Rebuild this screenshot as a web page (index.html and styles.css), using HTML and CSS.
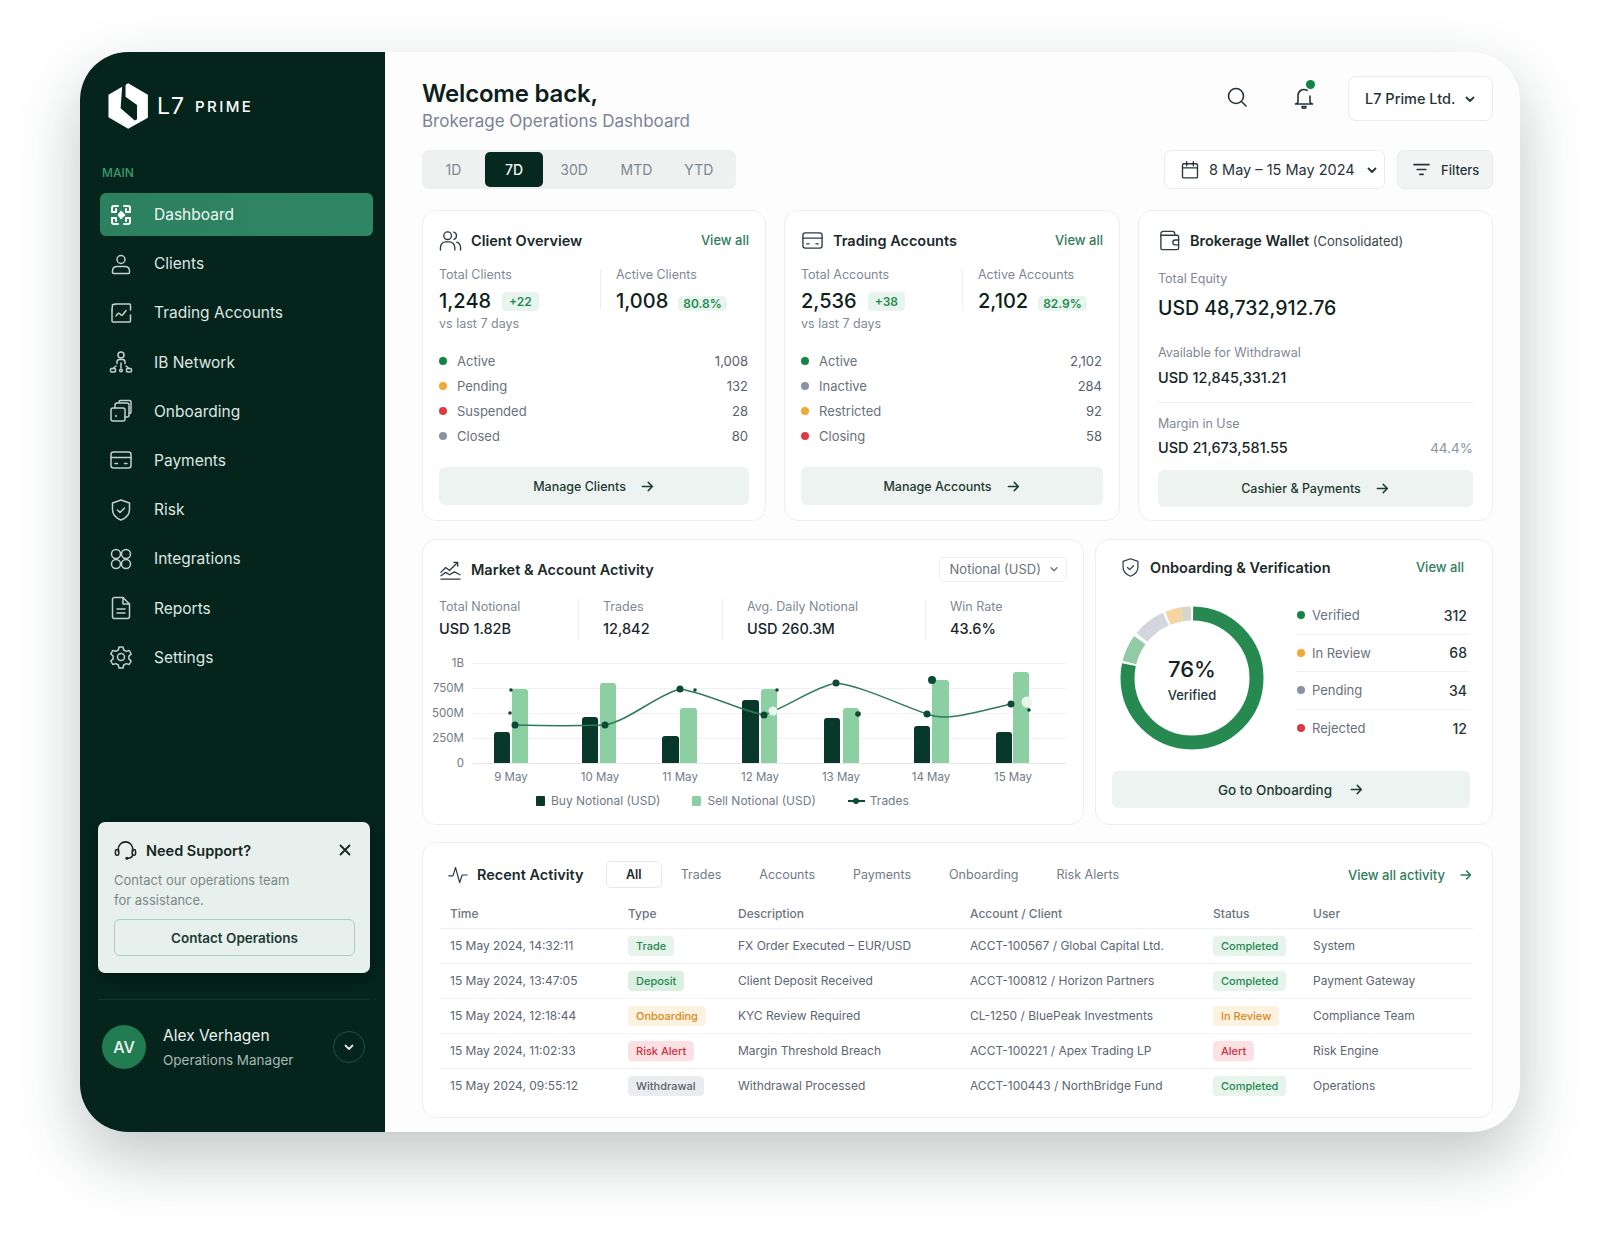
FILE: index.html
```html
<!DOCTYPE html>
<html lang="en">
<head>
    <meta charset="UTF-8">
    <meta name="viewport" content="width=device-width, initial-scale=1.0">
    <title>L7 Prime - Brokerage Operations Dashboard</title>
    <link rel="stylesheet" href="styles.css">
</head>
<body>
    <!-- shared icons -->
    <svg class="sprite" xmlns="http://www.w3.org/2000/svg">
        <symbol id="i-arrow" viewBox="0 0 16 16"><path d="M2.5 8h10.5M8.8 3.6 13.2 8l-4.4 4.4"/></symbol>
        <symbol id="i-chev" viewBox="0 0 12 12"><path d="M2.5 4.5 6 8l3.5-3.5"/></symbol>
        <symbol id="i-card" viewBox="0 0 24 24"><rect x="2" y="4" width="20" height="16" rx="2.5"/><path d="M2 9.5h20M6 15.5h2.5M15.5 15.5H18"/></symbol>
        <symbol id="i-shield" viewBox="0 0 24 24"><path d="M12 2 20.5 5v6.5c0 5-3.5 8.6-8.5 10.5-5-1.900-8.500-5.500-8.500-10.500V5z"/><path d="m8.500 12 2.500 2.500 4.500-4.500"/></symbol>
    </svg>

    <div class="frame">
        <aside class="sidebar">
            <div class="logo">
                <svg class="logo-mark" viewBox="85 98 122 140"><path class="logo-hex" d="M145 99 205 134V204L145 237 85 202V134Z"/><path class="logo-cut" d="M127 105 122 175 165 212 172 208V165L137 140V100Z"/></svg>
                <span class="logo-l7">L7</span>
                <span class="logo-prime">PRIME</span>
            </div>
            <div class="nav-label">MAIN</div>
            <nav class="nav">
                <a class="nav-item active">
                    <svg viewBox="0 0 24 24"><path d="M9 3H5a2 2 0 0 0-2 2v4M15 3h4a2 2 0 0 1 2 2v4M9 21H5a2 2 0 0 1-2-2v-4M15 21h4a2 2 0 0 0 2-2v-4"/><path d="M3 9h4V6M21 9h-4V6M3 15h4v3M21 15h-4v3"/><path class="fill" d="M12 7.500 16.500 12 12 16.500 8.500 12z"/></svg>
                    Dashboard
                </a>
                <a class="nav-item">
                    <svg viewBox="0 0 24 24"><circle cx="12" cy="7.500" r="4"/><path d="M3.500 20.500v-1.500c0-2.800 2.200-4.500 5-4.500h7c2.800 0 5 1.700 5 4.500v1.500a1 1 0 0 1-1 1h-15a1 1 0 0 1-1-1z"/></svg>
                    Clients
                </a>
                <a class="nav-item">
                    <svg viewBox="0 0 24 24"><path d="M6 3h14.500a1 1 0 0 1 1 1v5M21.500 14v6a1 1 0 0 1-1 1H4a1 1 0 0 1-1-1V9"/><path d="M3 9l.5-5.500H6M7 15c2-3.500 3-3.500 4.500-1.500s2.500 0 5.500-4"/></svg>
                    Trading Accounts
                </a>
                <a class="nav-item">
                    <svg viewBox="0 0 24 24"><circle cx="12" cy="5" r="3"/><path d="M8 13.500V12a2.500 2.500 0 0 1 2.500-2.500h3A2.500 2.500 0 0 1 16 12v1.500M12 13v5M7 16l-3 2.500M17 16l3 2.500"/><rect x="1.500" y="18.500" width="5" height="3.500" rx="1"/><circle cx="12" cy="20.500" r="1.300"/><rect x="17.500" y="18.500" width="5" height="3.500" rx="1"/></svg>
                    IB Network
                </a>
                <a class="nav-item">
                    <svg viewBox="0 0 24 24"><rect x="2" y="9" width="14" height="13" rx="2"/><path d="M6 9V6a2 2 0 0 1 2-2h10a2 2 0 0 1 2 2M16 18h2a2 2 0 0 0 2-2V7M10 4V3a1.500 1.500 0 0 1 1.500-1.500h9A1.500 1.500 0 0 1 22 3v10a1.500 1.500 0 0 1-1.500 1.500"/><circle class="fill" cx="7" cy="17" r="1"/></svg>
                    Onboarding
                </a>
                <a class="nav-item"><svg><use href="#i-card"/></svg>Payments</a>
                <a class="nav-item"><svg><use href="#i-shield"/></svg>Risk</a>
                <a class="nav-item">
                    <svg viewBox="0 0 24 24"><circle cx="7" cy="7" r="4.500"/><circle cx="17" cy="7" r="4.500"/><circle cx="7" cy="17" r="4.500"/><circle cx="17" cy="17" r="4.500"/></svg>
                    Integrations
                </a>
                <a class="nav-item">
                    <svg viewBox="0 0 24 24"><path d="M14 1.500H5.500a2 2 0 0 0-2 2v17a2 2 0 0 0 2 2h13a2 2 0 0 0 2-2V8z"/><path d="M14 1.500V8h6.500M8 13h8M8 17h8"/></svg>
                    Reports
                </a>
                <a class="nav-item">
                    <svg viewBox="0 0 24 24"><circle cx="12" cy="12" r="3.500"/><path d="M10 2h4l.7 3 2.500 1.400 3-.9 2 3.500-2.300 2.100v2.800l2.300 2.100-2 3.500-3-.9-2.500 1.400-.7 3h-4l-.7-3-2.500-1.400-3 .9-2-3.500 2.300-2.100V11L1.800 8.900l2-3.500 3 .9L9.300 5z"/></svg>
                    Settings
                </a>
            </nav>

            <div class="support">
                <div class="support-head">
                    <svg viewBox="0 0 24 24"><path d="M4.500 13v-2.500a7.500 7.500 0 0 1 15 0V13M19.500 16c0 2.500-2 4-4.500 4"/><rect x="1.500" y="11" width="3.500" height="6" rx="1.700"/><rect x="19" y="11" width="3.500" height="6" rx="1.700"/><circle class="fill" cx="13.500" cy="20" r="1.600"/></svg>
                    <strong>Need Support?</strong>
                    <svg class="support-close" viewBox="0 0 12 12"><path d="M1.500 1.500l9 9M10.500 1.500l-9 9"/></svg>
                </div>
                <p>Contact our operations team<br>for assistance.</p>
                <button class="support-btn">Contact Operations</button>
            </div>

            <div class="user">
                <div class="avatar">AV</div>
                <div class="user-info">
                    <div class="user-name">Alex Verhagen</div>
                    <div class="user-role">Operations Manager</div>
                </div>
                <div class="user-more"><svg><use href="#i-chev"/></svg></div>
            </div>
        </aside>

        <main class="main">
            <header class="topbar">
                <div>
                    <h1>Welcome back,</h1>
                    <div class="subtitle">Brokerage Operations Dashboard</div>
                </div>
                <div class="top-actions">
                    <svg class="top-icon" viewBox="0 0 24 24"><circle cx="11" cy="11" r="7.500"/><path d="m17 17 4 4"/></svg>
                    <div class="bell">
                        <svg class="top-icon" viewBox="0 0 24 24"><path d="M6 17V10.500a6 6 0 0 1 9-5.200M18 11v6M3.500 19c1.500-.5 2.500-1 2.500-2M20.500 19c-1.500-.5-2.500-1-2.500-2M3.500 19h17"/><path d="M10 21.500a2 2 0 0 0 4 0z"/></svg>
                        <span class="bell-dot"></span>
                    </div>
                    <div class="company">L7 Prime Ltd. <svg><use href="#i-chev"/></svg></div>
                </div>
            </header>

            <div class="toolbar">
                <div class="periods">
                    <span>1D</span>
                    <span class="active">7D</span>
                    <span>30D</span>
                    <span>MTD</span>
                    <span>YTD</span>
                </div>
                <div class="toolbar-right">
                    <div class="date-btn">
                        <svg viewBox="0 0 24 24"><rect x="3" y="4.500" width="18" height="17" rx="1.500"/><path d="M3 9.500h18M8 2v5M16 2v5"/></svg>
                        8 May – 15 May 2024
                        <svg class="chev"><use href="#i-chev"/></svg>
                    </div>
                    <div class="filter-btn">
                        <svg viewBox="0 0 16 16"><path d="M1 3.500h14M4 8h8M6.500 12.500h3"/></svg>
                        Filters
                    </div>
                </div>
            </div>

            <section class="row row-top">
                <div class="card">
                    <div class="card-head">
                        <svg class="head-icon" viewBox="0 0 24 24"><circle cx="9" cy="7" r="4"/><path d="M1.500 22v-2.500c0-3.500 2.500-6 5.500-6h4c3 0 5.500 2.500 5.500 6V22M15.500 3.200a4 4 0 0 1 0 7.600M18.500 13.800c2.300.7 4 2.700 4 5.700V22"/></svg>
                        <h2>Client Overview</h2>
                        <a class="view-all">View all</a>
                    </div>
                    <div class="stats">
                        <div class="stat">
                            <div class="label">Total Clients</div>
                            <div class="big">1,248 <span class="chip">+22</span></div>
                            <div class="label sub">vs last 7 days</div>
                        </div>
                        <div class="stat stat-side">
                            <div class="label">Active Clients</div>
                            <div class="big">1,008 <span class="chip low">80.8%</span></div>
                        </div>
                    </div>
                    <ul class="status-list">
                        <li><i class="dot green"></i>Active<b>1,008</b></li>
                        <li><i class="dot orange"></i>Pending<b>132</b></li>
                        <li><i class="dot red"></i>Suspended<b>28</b></li>
                        <li><i class="dot grey"></i>Closed<b>80</b></li>
                    </ul>
                    <a class="card-btn">Manage Clients <svg><use href="#i-arrow"/></svg></a>
                </div>

                <div class="card">
                    <div class="card-head">
                        <svg class="head-icon"><use href="#i-card"/></svg>
                        <h2>Trading Accounts</h2>
                        <a class="view-all">View all</a>
                    </div>
                    <div class="stats">
                        <div class="stat">
                            <div class="label">Total Accounts</div>
                            <div class="big">2,536 <span class="chip">+38</span></div>
                            <div class="label sub">vs last 7 days</div>
                        </div>
                        <div class="stat stat-side">
                            <div class="label">Active Accounts</div>
                            <div class="big">2,102 <span class="chip low">82.9%</span></div>
                        </div>
                    </div>
                    <ul class="status-list">
                        <li><i class="dot green"></i>Active<b>2,102</b></li>
                        <li><i class="dot grey"></i>Inactive<b>284</b></li>
                        <li><i class="dot orange"></i>Restricted<b>92</b></li>
                        <li><i class="dot red"></i>Closing<b>58</b></li>
                    </ul>
                    <a class="card-btn">Manage Accounts <svg><use href="#i-arrow"/></svg></a>
                </div>

                <div class="card wallet">
                    <div class="card-head">
                        <svg class="head-icon" viewBox="0 0 24 24"><path d="M3 7V5a2.500 2.500 0 0 1 2.500-2.500H15A2.500 2.500 0 0 1 17.500 5v1.500"/><path d="M3 7a1 1 0 0 1 1-.5h16a1.500 1.500 0 0 1 1.500 1.500v12a1.500 1.500 0 0 1-1.500 1.500H4.500A1.500 1.500 0 0 1 3 20z"/><path d="M21.500 11.500H18a2.500 2.500 0 0 0 0 5h3.500"/></svg>
                        <h2>Brokerage Wallet <span>(Consolidated)</span></h2>
                    </div>
                    <div class="label equity-label">Total Equity</div>
                    <div class="equity">USD 48,732,912.76</div>
                    <div class="label avail-label">Available for Withdrawal</div>
                    <div class="money avail">USD 12,845,331.21</div>
                    <div class="wallet-rule"></div>
                    <div class="label">Margin in Use</div>
                    <div class="money margin">USD 21,673,581.55 <span>44.4%</span></div>
                    <a class="card-btn">Cashier &amp; Payments <svg><use href="#i-arrow"/></svg></a>
                </div>
            </section>

            <section class="row row-mid">
                <div class="card market">
                    <div class="card-head">
                        <svg class="head-icon" viewBox="0 0 24 24"><path d="M2 15l5-5 4 3 8-8M15.500 4.500h4v4M2 18.500l5-3.500 4 2.500 5-3 6 3M2 22h20"/></svg>
                        <h2>Market &amp; Account Activity</h2>
                        <div class="mini-select">Notional (USD) <svg><use href="#i-chev"/></svg></div>
                    </div>
                    <div class="kpis">
                        <div class="kpi"><div class="label">Total Notional</div><div class="money">USD 1.82B</div></div>
                        <div class="kpi"><div class="label">Trades</div><div class="money">12,842</div></div>
                        <div class="kpi"><div class="label">Avg. Daily Notional</div><div class="money">USD 260.3M</div></div>
                        <div class="kpi"><div class="label">Win Rate</div><div class="money">43.6%</div></div>
                    </div>
                    <svg class="chart" viewBox="430 650 644 135">
                        <g class="grid">
                            <path d="M473 663.500H1066M473 688.500H1066M473 713.500H1066M473 738.500H1066"/>
                            <path class="base" d="M473 763.500H1066"/>
                        </g>
                        <g class="y-axis">
                            <text x="464" y="667">1B</text>
                            <text x="464" y="692">750M</text>
                            <text x="464" y="717">500M</text>
                            <text x="464" y="742">250M</text>
                            <text x="464" y="767">0</text>
                        </g>
                        <g class="bars-sell">
                            <path d="M512 763V692a3 3 0 0 1 3-3h10a3 3 0 0 1 3 3v71z"/>
                            <path d="M600 763V686a3 3 0 0 1 3-3h10a3 3 0 0 1 3 3v77z"/>
                            <path d="M680 763V711a3 3 0 0 1 3-3h11a3 3 0 0 1 3 3v52z"/>
                            <path d="M761 763V692a3 3 0 0 1 3-3h10a3 3 0 0 1 3 3v71z"/>
                            <path d="M843 763V711a3 3 0 0 1 3-3h10a3 3 0 0 1 3 3v52z"/>
                            <path d="M932 763V683a3 3 0 0 1 3-3h11a3 3 0 0 1 3 3v80z"/>
                            <path d="M1013 763V675a3 3 0 0 1 3-3h10a3 3 0 0 1 3 3v88z"/>
                        </g>
                        <g class="bars-buy">
                            <path d="M494 763V735a3 3 0 0 1 3-3h10a3 3 0 0 1 3 3v28z"/>
                            <path d="M582 763V720a3 3 0 0 1 3-3h10a3 3 0 0 1 3 3v43z"/>
                            <path d="M662 763V739a3 3 0 0 1 3-3h11a3 3 0 0 1 3 3v24z"/>
                            <path d="M742 763V703a3 3 0 0 1 3-3h11a3 3 0 0 1 3 3v60z"/>
                            <path d="M824 763V721a3 3 0 0 1 3-3h10a3 3 0 0 1 3 3v42z"/>
                            <path d="M914 763V729a3 3 0 0 1 3-3h10a3 3 0 0 1 3 3v34z"/>
                            <path d="M996 763V735a3 3 0 0 1 3-3h10a3 3 0 0 1 3 3v28z"/>
                        </g>
                        <path class="trend" d="M515 725C545 726 580 726 605 725 630 720 655 696 680 689 710 694 738 710 764 715 790 706 812 688 836 683 862 686 900 705 927 714 945 721 965 715 1011 704"/>
                        <g class="points">
                            <circle cx="515" cy="725" r="3.500"/><circle cx="605" cy="725" r="3.500"/>
                            <circle cx="680" cy="689" r="3.500"/><circle cx="764" cy="715" r="3.500"/>
                            <circle cx="836" cy="683" r="3.500"/><circle cx="927" cy="714" r="3.500"/>
                            <circle cx="1011" cy="704" r="3.500"/><circle cx="932" cy="680" r="4"/>
                            <circle cx="511" cy="690" r="1.800"/><circle cx="510" cy="713" r="1.800"/>
                            <circle cx="695" cy="690" r="1.800"/><circle cx="777" cy="690" r="1.800"/>
                            <circle cx="858" cy="714" r="2.800"/><circle cx="1029" cy="710" r="1.800"/>
                        </g>
                        <circle class="point-light" cx="773" cy="711" r="4.500"/>
                        <circle class="point-light" cx="1027" cy="702" r="5.500"/>
                        <g class="x-axis">
                            <text x="511" y="781">9 May</text>
                            <text x="600" y="781">10 May</text>
                            <text x="680" y="781">11 May</text>
                            <text x="760" y="781">12 May</text>
                            <text x="841" y="781">13 May</text>
                            <text x="931" y="781">14 May</text>
                            <text x="1013" y="781">15 May</text>
                        </g>
                    </svg>
                    <div class="legend">
                        <span><i class="swatch dark"></i>Buy Notional (USD)</span>
                        <span><i class="swatch light"></i>Sell Notional (USD)</span>
                        <span><i class="swatch-line"></i>Trades</span>
                    </div>
                </div>

                <div class="card onboarding">
                    <div class="card-head">
                        <svg class="head-icon"><use href="#i-shield"/></svg>
                        <h2>Onboarding &amp; Verification</h2>
                        <a class="view-all">View all</a>
                    </div>
                    <div class="onb-body">
                        <svg class="donut" viewBox="0 0 144 144">
                            <!-- pathLength 360, so dash values are degrees -->
                            <g transform="rotate(-90 72 72)">
                                <circle class="seg" cx="72" cy="72" r="64.500" pathLength="360" stroke="#268a50" stroke-dasharray="281 79" stroke-dashoffset="-1"/>
                                <circle class="seg" cx="72" cy="72" r="64.500" pathLength="360" stroke="#90cba6" stroke-dasharray="22 338" stroke-dashoffset="-284"/>
                                <circle class="seg" cx="72" cy="72" r="64.500" pathLength="360" stroke="#d3d6dc" stroke-dasharray="27 333" stroke-dashoffset="-309"/>
                                <circle class="seg" cx="72" cy="72" r="64.500" pathLength="360" stroke="#f7d5a2" stroke-dasharray="13 347" stroke-dashoffset="-338"/>
                                <circle class="seg" cx="72" cy="72" r="64.500" pathLength="360" stroke="#d6d7ca" stroke-dasharray="8 352" stroke-dashoffset="-351"/>
                            </g>
                            <text class="donut-num" x="72" y="71">76%</text>
                            <text class="donut-cap" x="72" y="94">Verified</text>
                        </svg>
                        <ul class="onb-list">
                            <li><i class="dot green"></i>Verified<b>312</b></li>
                            <li><i class="dot orange"></i>In Review<b>68</b></li>
                            <li><i class="dot grey"></i>Pending<b>34</b></li>
                            <li><i class="dot red"></i>Rejected<b>12</b></li>
                        </ul>
                    </div>
                    <a class="card-btn">Go to Onboarding <svg><use href="#i-arrow"/></svg></a>
                </div>
            </section>

            <section class="card activity">
                <div class="activity-head">
                    <div class="activity-title">
                        <svg class="head-icon" viewBox="0 0 24 24"><path d="M1 13h5l3-10 5 18 3-9h6"/></svg>
                        <h2>Recent Activity</h2>
                    </div>
                    <div class="tabs">
                        <span class="active">All</span>
                        <span>Trades</span>
                        <span>Accounts</span>
                        <span>Payments</span>
                        <span>Onboarding</span>
                        <span>Risk Alerts</span>
                    </div>
                    <a class="view-activity">View all activity <svg><use href="#i-arrow"/></svg></a>
                </div>
                <table class="activity-table">
                    <colgroup><col class="c-time"><col class="c-type"><col class="c-desc"><col class="c-acct"><col class="c-status"><col></colgroup>
                    <thead>
                        <tr><th>Time</th><th>Type</th><th>Description</th><th>Account / Client</th><th class="th-status">Status</th><th>User</th></tr>
                    </thead>
                    <tbody>
                        <tr>
                            <td>15 May 2024, 14:32:11</td>
                            <td><span class="pill p-green">Trade</span></td>
                            <td>FX Order Executed – EUR/USD</td>
                            <td>ACCT-100567 / Global Capital Ltd.</td>
                            <td><span class="pill p-green">Completed</span></td>
                            <td>System</td>
                        </tr>
                        <tr>
                            <td>15 May 2024, 13:47:05</td>
                            <td><span class="pill p-deposit">Deposit</span></td>
                            <td>Client Deposit Received</td>
                            <td>ACCT-100812 / Horizon Partners</td>
                            <td><span class="pill p-green">Completed</span></td>
                            <td>Payment Gateway</td>
                        </tr>
                        <tr>
                            <td>15 May 2024, 12:18:44</td>
                            <td><span class="pill p-orange">Onboarding</span></td>
                            <td>KYC Review Required</td>
                            <td>CL-1250 / BluePeak Investments</td>
                            <td><span class="pill p-orange">In Review</span></td>
                            <td>Compliance Team</td>
                        </tr>
                        <tr>
                            <td>15 May 2024, 11:02:33</td>
                            <td><span class="pill p-red">Risk Alert</span></td>
                            <td>Margin Threshold Breach</td>
                            <td>ACCT-100221 / Apex Trading LP</td>
                            <td><span class="pill p-red">Alert</span></td>
                            <td>Risk Engine</td>
                        </tr>
                        <tr>
                            <td>15 May 2024, 09:55:12</td>
                            <td><span class="pill p-grey">Withdrawal</span></td>
                            <td>Withdrawal Processed</td>
                            <td>ACCT-100443 / NorthBridge Fund</td>
                            <td><span class="pill p-green">Completed</span></td>
                            <td>Operations</td>
                        </tr>
                    </tbody>
                </table>
            </section>
        </main>
    </div>
</body>
</html>
```

FILE: styles.css
```css
* {
    box-sizing: border-box;
}
body {
    margin: 0;
    padding: 52px 80px 0;
    height: 1240px;
    overflow: hidden;
    background-color: #fff;
    font-family: Inter, "Liberation Sans", sans-serif;
    color: #1a2a2a;
}
h1, h2, p, ul {
    margin: 0;
    padding: 0;
}
ul {
    list-style: none;
}
svg {
    display: block;
    fill: none;
    stroke: currentColor;
    stroke-width: 1.6;
    stroke-linecap: round;
    stroke-linejoin: round;
}
.sprite {
    display: none;
}
.fill {
    fill: currentColor;
    stroke: none;
}

.frame {
    display: grid;
    grid-template-columns: 305px 1fr;
    width: 1440px;
    height: 1080px;
    border-radius: 48px;
    box-shadow: 0 26px 64px rgba(30, 55, 45, 0.28);
    background-color: #fdfdfd;
}

/* sidebar */
.sidebar {
    display: flex;
    flex-direction: column;
    padding: 31px 15px 63px 18px;
    border-radius: 48px 0 0 48px;
    background-color: #04241c;
    color: #dfe7e3;
}
.logo {
    display: flex;
    align-items: center;
    height: 46px;
    padding-left: 10px;
}
.logo-mark {
    width: 41px;
    height: 46px;
    margin-right: 8px;
    stroke: none;
}
.logo-hex {
    fill: #fff;
}
.logo-cut {
    fill: #04241c;
}
.logo-l7 {
    font-size: 23px;
    font-weight: 400;
    letter-spacing: 1px;
    color: #fff;
}
.logo-prime {
    margin-left: 10px;
    font-size: 15px;
    font-weight: 500;
    letter-spacing: 2.4px;
    color: #fff;
}
.nav-label {
    margin: 36px 0 12px 4px;
    font-size: 12px;
    line-height: 16px;
    font-weight: 500;
    color: #3f9a6a;
}
.nav {
    display: flex;
    flex-direction: column;
    gap: 6.2px;
    margin: 0 -3px 0 2px;
}
.nav-item {
    display: flex;
    align-items: center;
    height: 43px;
    padding-left: 9px;
    border-radius: 6px;
    font-size: 15.5px;
}
.nav-item svg {
    flex: none;
    width: 24px;
    height: 24px;
    margin-right: 21px;
    color: #c4d0cb;
    stroke-width: 1.5;
}
.nav-item.active {
    background: linear-gradient(90deg, #2b8060, #2f8664);
    color: #f2f7f4;
}
.nav-item.active svg {
    color: #fff;
    stroke-width: 2;
}
.support {
    margin-top: auto;
    height: 151px;
    padding: 15px 15px 0 16px;
    border-radius: 7px;
    background-color: #e7f0ec;
    box-shadow: 0 4px 14px rgba(0, 0, 0, 0.3);
    color: #13261f;
}
.support-head {
    display: flex;
    align-items: center;
    height: 26px;
}
.support-head svg {
    width: 23px;
    height: 23px;
    margin-right: 9px;
}
.support-head strong {
    font-size: 14.5px;
    font-weight: 600;
}
.support-head .support-close {
    width: 12px;
    height: 12px;
    margin: 0 4px 0 auto;
    stroke-width: 1.8;
}
.support p {
    margin-top: 7px;
    font-size: 13px;
    line-height: 20px;
    color: #7b8a8b;
}
.support-btn {
    display: block;
    width: 241px;
    height: 37px;
    margin-top: 9px;
    border: 1.5px solid #a9cfbb;
    border-radius: 6px;
    background: transparent;
    font-family: inherit;
    font-size: 13.5px;
    font-weight: 600;
    color: #1d3a33;
}
.user {
    display: flex;
    align-items: center;
    margin-top: 26px;
    padding: 25px 0 0 4px;
    border-top: 1px solid #12362c;
}
.avatar {
    display: flex;
    align-items: center;
    justify-content: center;
    width: 44px;
    height: 44px;
    border-radius: 50%;
    background-color: #217c52;
    font-size: 16px;
    font-weight: 500;
    color: #f3f8f5;
}
.user-info {
    margin-left: 17px;
}
.user-name {
    font-size: 15.5px;
    line-height: 22px;
    color: #eef3f1;
}
.user-role {
    margin-top: 4px;
    font-size: 13.5px;
    line-height: 18px;
    color: #a9b8b3;
}
.user-more {
    display: flex;
    align-items: center;
    justify-content: center;
    width: 32px;
    height: 32px;
    margin: 0 5px 0 auto;
    border: 1px solid #1e5444;
    border-radius: 50%;
}
.user-more svg {
    width: 12px;
    height: 12px;
    stroke-width: 1.8;
}

/* main column */
.main {
    padding: 24px 27px 0 37px;
    min-width: 0;
}
.topbar {
    display: flex;
    justify-content: space-between;
    height: 74px;
}
h1 {
    margin-top: 3px;
    font-size: 24px;
    line-height: 30px;
    font-weight: 600;
    letter-spacing: -0.2px;
    color: #0d1f1c;
}
.subtitle {
    font-size: 17px;
    line-height: 24px;
    color: #7a8494;
}
.top-actions {
    display: flex;
    align-items: flex-start;
}
.top-icon {
    width: 24px;
    height: 24px;
    color: #26343a;
}
.top-actions > .top-icon {
    margin: 9px 43px 0 0;
}
.bell {
    position: relative;
    margin: 9px 32px 0 0;
}
.bell-dot {
    position: absolute;
    top: -5px;
    right: 1px;
    width: 9px;
    height: 9px;
    border-radius: 50%;
    background-color: #118447;
}
.company {
    display: flex;
    align-items: center;
    height: 45px;
    width: 145px;
    padding-left: 16px;
    border: 1.5px solid #e8ebee;
    border-radius: 8px;
    background-color: #fff;
    font-size: 14.5px;
    font-weight: 500;
    color: #27343a;
}
.company svg {
    width: 12px;
    height: 12px;
    margin-left: 9px;
    stroke-width: 1.8;
}
.toolbar {
    display: flex;
    justify-content: space-between;
    height: 39px;
    margin-bottom: 21px;
}
.periods {
    display: flex;
    align-items: center;
    width: 314px;
    padding: 0 6px 0 0;
    border-radius: 7px;
    background-color: #eff1f1;
    font-size: 14px;
    color: #7d8791;
}
.periods span {
    flex: 1;
    text-align: center;
}
.periods span:first-child {
    flex: none;
    width: 63px;
}
.periods span.active {
    flex: none;
    width: 58px;
    height: 35px;
    line-height: 35px;
    border-radius: 5px;
    background-color: #06291f;
    font-weight: 500;
    color: #f2f6f4;
}
.toolbar-right {
    display: flex;
    gap: 12px;
}
.date-btn, .filter-btn {
    display: flex;
    align-items: center;
    height: 39px;
    border: 1.5px solid #e8ebee;
    border-radius: 7px;
    color: #27343a;
}
.date-btn {
    width: 221px;
    padding-left: 15px;
    background-color: #fff;
    font-size: 14.5px;
}
.date-btn > svg {
    width: 20px;
    height: 20px;
    margin-right: 9px;
}
.date-btn .chev {
    width: 12px;
    height: 12px;
    margin: 0 0 0 11px;
    stroke-width: 1.8;
}
.filter-btn {
    width: 96px;
    padding-left: 15px;
    background-color: #f2f4f4;
    font-size: 13px;
    font-weight: 500;
}
.filter-btn svg {
    width: 17px;
    height: 17px;
    margin-right: 11px;
}

/* cards */
.row {
    display: grid;
}
.row-top {
    grid-template-columns: 344px 336px 355px;
    gap: 18px;
    height: 311px;
    margin-bottom: 18px;
}
.row-mid {
    grid-template-columns: 662px 398px;
    gap: 11px;
    height: 286px;
    margin-bottom: 17px;
}
.card {
    display: flex;
    flex-direction: column;
    padding: 17px 16px 15px;
    border: 1.5px solid #eceef1;
    border-radius: 14px;
    background-color: #fff;
}
.card-head {
    display: flex;
    align-items: center;
    height: 24px;
}
.head-icon {
    flex: none;
    width: 23px;
    height: 23px;
    margin-right: 9px;
    color: #2e3b42;
    stroke-width: 1.4;
}
h2 {
    font-size: 14.5px;
    font-weight: 600;
    color: #1b2a2b;
}
.view-all {
    margin-left: auto;
    font-size: 13px;
    font-weight: 500;
    color: #2f7d5b;
}
.label {
    font-size: 12.5px;
    line-height: 16px;
    color: #7f8895;
}
.stats {
    display: grid;
    grid-template-columns: 161px 1fr;
    margin-top: 15px;
}
.stat-side {
    height: 40px;
    margin-top: 2px;
    padding-left: 15px;
    border-left: 1px solid #eceef1;
}
.stat-side .label {
    margin-top: -2px;
}
.big {
    display: flex;
    align-items: center;
    margin-top: 5px;
    font-size: 20px;
    line-height: 26px;
    font-weight: 500;
    color: #0f1f20;
}
.chip {
    margin-left: 11px;
    padding: 0 7px;
    height: 19px;
    border-radius: 4px;
    background-color: #e8f5ee;
    font-size: 12px;
    line-height: 19px;
    font-weight: 600;
    color: #1e8a50;
}
.chip.low {
    height: 15px;
    margin: 5px 0 0 10px;
    line-height: 15px;
    padding: 0 5px;
}
.sub {
    margin-top: 2px;
}
.status-list {
    margin-top: 16px;
}
.status-list li {
    display: flex;
    align-items: center;
    height: 25px;
    font-size: 13px;
    color: #69717d;
}
.status-list b {
    margin-left: auto;
    padding-right: 1px;
    font-weight: 400;
    color: #59616c;
}
.dot {
    flex: none;
    width: 8px;
    height: 8px;
    margin-right: 10px;
    border-radius: 50%;
}
.green { background-color: #118447; }
.orange { background-color: #f5a733; }
.red { background-color: #dd3a48; }
.grey { background-color: #8a93a3; }
.card-btn {
    display: flex;
    align-items: center;
    justify-content: center;
    height: 38px;
    margin-top: auto;
    border-radius: 6px;
    background-color: #edf3f0;
    font-size: 12.5px;
    font-weight: 500;
    color: #1f3a33;
}
.card-btn svg {
    width: 15px;
    height: 15px;
    margin-left: 14px;
    stroke-width: 1.6;
}

/* wallet */
.wallet {
    padding: 17px 19px 13px;
}
.wallet h2 span {
    font-size: 13px;
    font-weight: 400;
    color: #3a474c;
}
.equity-label {
    margin-top: 19px;
}
.equity {
    margin-top: 7px;
    font-size: 19.5px;
    line-height: 28px;
    font-weight: 500;
    color: #0f1f20;
}
.avail-label {
    margin-top: 23px;
}
.money {
    font-size: 14.5px;
    line-height: 22px;
    font-weight: 500;
    color: #17262a;
}
.avail {
    margin-top: 6px;
}
.wallet-rule {
    margin: 13px 0;
    height: 1px;
    background-color: #eceef1;
}
.margin {
    display: flex;
    justify-content: space-between;
    margin-top: 5px;
}
.margin span {
    font-size: 13.5px;
    font-weight: 400;
    color: #8b939e;
}
.wallet .card-btn {
    height: 37px;
}

/* market chart */
.mini-select {
    display: flex;
    align-items: center;
    height: 25px;
    margin: 0 0 0 auto;
    padding: 0 7px 0 10px;
    border: 1.5px solid #eceef1;
    border-radius: 5px;
    font-size: 13px;
    color: #6a727d;
}
.mini-select svg {
    width: 10px;
    height: 10px;
    margin-left: 8px;
}
.kpis {
    display: grid;
    grid-template-columns: 139px 144px 203px 1fr;
    margin-top: 18px;
}
.kpi {
    padding-left: 24px;
    border-left: 1px solid #eceef1;
}
.kpi:first-child {
    padding-left: 0;
    border-left: none;
}
.kpi .money {
    margin-top: 3px;
}
.chart {
    width: 644px;
    height: 135px;
    margin: 10px 0 0 -9px;
    stroke: none;
    overflow: visible;
}
.grid path {
    stroke: #f0f1f3;
    stroke-width: 1;
}
.grid .base {
    stroke: #e6e8ea;
}
.y-axis text, .x-axis text {
    font-size: 11.5px;
    fill: #727b86;
}
.y-axis text {
    text-anchor: end;
}
.x-axis text {
    text-anchor: middle;
}
.bars-sell path {
    fill: #8ccfa2;
}
.bars-buy path {
    fill: #07382a;
}
.trend {
    stroke: #2f7a58;
    stroke-width: 1.5;
}
.points circle {
    fill: #0c4a35;
}
.point-light {
    fill: #e9f5ee;
}
.legend {
    display: flex;
    gap: 32px;
    height: 16px;
    margin-top: 8px;
    padding-left: 97px;
    font-size: 12px;
    line-height: 16px;
    color: #727b86;
}
.legend span {
    display: flex;
    align-items: center;
}
.swatch {
    width: 9px;
    height: 10px;
    margin-right: 6px;
    border-radius: 1px;
}
.swatch.dark {
    background-color: #07382a;
}
.swatch.light {
    background-color: #8ccfa2;
}
.swatch-line {
    position: relative;
    width: 17px;
    height: 2px;
    margin-right: 5px;
    background-color: #0c4a35;
}
.swatch-line::after {
    content: "";
    position: absolute;
    top: -2px;
    left: 5px;
    width: 6px;
    height: 6px;
    border-radius: 50%;
    background-color: #0c4a35;
}

/* onboarding */
.onboarding {
    padding: 15px 22px 16px 16px;
}
.onboarding .card-head {
    padding: 0 6px 0 8px;
}
.onboarding .head-icon {
    width: 21px;
    height: 21px;
    margin-right: 9px;
}
.onb-body {
    display: flex;
    gap: 32px;
    margin-top: 27px;
    padding-left: 8px;
}
.donut {
    flex: none;
    width: 144px;
    height: 144px;
    stroke: none;
}
.seg {
    fill: none;
    stroke-width: 14;
    stroke-linecap: butt;
}
.donut-num {
    font-size: 22px;
    font-weight: 500;
    fill: #142223;
    text-anchor: middle;
}
.donut-cap {
    font-size: 13px;
    font-weight: 500;
    fill: #27343a;
    text-anchor: middle;
}
.onb-list {
    flex: 1;
    margin-top: -9px;
}
.onb-list li {
    display: flex;
    align-items: center;
    height: 37.5px;
    padding-right: 3px;
    border-bottom: 1px solid #f0f1f3;
    font-size: 13px;
    color: #69717d;
}
.onb-list li:last-child {
    border-bottom: none;
}
.onb-list .dot {
    margin-left: 1px;
    margin-right: 7px;
}
.onb-list b {
    margin-left: auto;
    font-size: 14px;
    font-weight: 500;
    color: #26343a;
}
.onboarding .card-btn {
    height: 37px;
    font-size: 13.5px;
}
.onboarding .card-btn svg {
    margin-left: 17px;
}

/* recent activity */
.activity {
    height: 276px;
    padding: 19px 19px 0 17px;
}
.activity-head {
    display: flex;
    align-items: center;
    height: 25px;
}
.activity-title {
    display: flex;
    align-items: center;
    width: 166px;
    padding-left: 8px;
}
.activity-title .head-icon {
    width: 20px;
    height: 20px;
}
.tabs {
    display: flex;
    align-items: center;
    font-size: 12.5px;
    color: #727b86;
}
.tabs span {
    padding: 0 19px;
    line-height: 25px;
}
.tabs .active {
    border: 1.5px solid #e6e9ec;
    border-radius: 5px;
    font-weight: 600;
    color: #1b2a2b;
}
.view-activity {
    display: flex;
    align-items: center;
    margin-left: auto;
    font-size: 13px;
    font-weight: 500;
    color: #2f7d5b;
}
.view-activity svg {
    width: 14px;
    height: 14px;
    margin-left: 14px;
    stroke-width: 1.7;
}
.activity-table {
    width: 100%;
    margin-top: 12px;
    table-layout: fixed;
    border-collapse: collapse;
    font-size: 12px;
    color: #5d6673;
}
.c-time { width: 188px; }
.c-type { width: 110px; }
.c-desc { width: 232px; }
.c-acct { width: 243px; }
.c-status { width: 100px; }
.activity-table th {
    height: 29px;
    padding: 0 0 0 0;
    border-bottom: 1px solid #eceef1;
    text-align: left;
    font-weight: 500;
    color: #6c7580;
}
.activity-table td {
    height: 35px;
    padding: 0;
    border-bottom: 1px solid #f0f1f3;
}
.activity-table tr:last-child td {
    border-bottom: none;
}
.activity-table th:first-child, .activity-table td:first-child, .th-status {
    padding-left: 10px;
}
.pill {
    display: inline-block;
    height: 20px;
    padding: 0 8px;
    border-radius: 4px;
    font-size: 11px;
    line-height: 20px;
    font-weight: 500;
    vertical-align: middle;
}
.p-green { background-color: #e6f4ec; color: #1e8a50; }
.p-deposit { background-color: #dcefe3; color: #1e8a50; }
.p-orange { background-color: #fdf1e0; color: #d68a22; }
.p-red { background-color: #fbe1e4; color: #cf2f40; }
.p-grey { background-color: #eaecef; color: #59626d; }
```
